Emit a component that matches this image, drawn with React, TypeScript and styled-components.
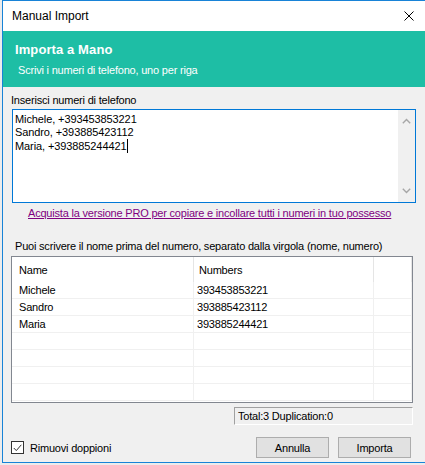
import React from "react";
import styled, { createGlobalStyle } from "styled-components";

const GlobalStyle = createGlobalStyle`
  html, body {
    margin: 0;
    padding: 0;
    background: #ececec;
    font-family: "Liberation Sans", Arial, sans-serif;
    font-size: 11px;
    letter-spacing: -0.2px;
    color: #000;
  }
`;

const Window = styled.div`
  box-sizing: border-box;
  margin-left: 2px;
  width: 423px;
  height: 463px;
  border: 1px solid #1883d7;
  border-right: none;
  background: #f0f0f0;
  display: flex;
  flex-direction: column;
  overflow: hidden;
`;

const TitleBar = styled.div`
  height: 30px;
  flex-shrink: 0;
  background: #fff;
  display: flex;
  align-items: center;
  justify-content: space-between;
  padding: 0 11px 0 9px;
`;

const TitleText = styled.span`
  font-size: 12px;
  line-height: 16px;
  letter-spacing: 0;
`;

const Banner = styled.div`
  height: 56px;
  flex-shrink: 0;
  box-sizing: border-box;
  background: #1ebea5;
  color: #fff;
  padding: 11px 0 0 12px;
`;

const BannerTitle = styled.div`
  font-size: 13px;
  font-weight: 700;
  line-height: 16px;
  letter-spacing: 0.1px;
`;

const BannerSubtitle = styled.div`
  margin: 6px 0 0 3px;
  line-height: 13px;
`;

const Body = styled.div`
  display: flex;
  flex-direction: column;
  padding-left: 8px;
`;

const Label = styled.div<{ $top: number; $left?: number }>`
  margin-top: ${({ $top }) => $top}px;
  margin-left: ${({ $left = 0 }) => $left}px;
  line-height: 13px;
  white-space: nowrap;
`;

const TextBox = styled.div`
  box-sizing: border-box;
  margin: 2px 0 0 1px;
  width: 404px;
  height: 94px;
  border: 1px solid #0078d7;
  background: #fff;
  display: flex;
`;

const TextContent = styled.div`
  flex: 1;
  padding: 3px 2px;
  line-height: 13px;
  letter-spacing: -0.1px;
  white-space: pre;
`;

const Caret = styled.span`
  display: inline-block;
  width: 1px;
  height: 14px;
  margin-left: 1px;
  background: #000;
  vertical-align: -3px;
`;

const ScrollBar = styled.div`
  width: 17px;
  background: #f0f0f0;
  display: flex;
  flex-direction: column;
  justify-content: space-between;
  align-items: center;
  padding: 8px 0;
`;

const Link = styled.a`
  margin: 4px 0 0 17px;
  line-height: 13px;
  color: #800080;
  text-decoration: underline;
  white-space: nowrap;
  cursor: pointer;
`;

const ListView = styled.div`
  box-sizing: border-box;
  margin-top: 3px;
  width: 402px;
  height: 147px;
  border: 1px solid #828790;
  background: #fff;
  overflow: hidden;
`;

const ListRow = styled.div<{ $header?: boolean }>`
  box-sizing: border-box;
  display: grid;
  grid-template-columns: 182px 180px 1fr;
  height: ${({ $header }) => ($header ? 25 : 17)}px;
  border-bottom: ${({ $header }) => ($header ? "none" : "1px solid #f0f0f0")};
`;

const Cell = styled.div<{ $pad: number; $header?: boolean }>`
  box-sizing: border-box;
  display: flex;
  align-items: center;
  padding-left: ${({ $pad }) => $pad}px;
  border-right: 1px solid ${({ $header }) => ($header ? "#e5e5e5" : "#f0f0f0")};
  white-space: nowrap;
`;

const StatusBox = styled.div`
  box-sizing: border-box;
  margin: 4px 0 0 223px;
  width: 179px;
  height: 18px;
  border-top: 1px solid #a0a0a0;
  border-left: 1px solid #a0a0a0;
  border-right: 1px solid #fff;
  border-bottom: 1px solid #fff;
  padding-left: 3px;
  line-height: 16px;
`;

const Footer = styled.div`
  margin: 12px 14px 0 0;
  height: 21px;
  display: flex;
  align-items: center;
`;

const CheckLabel = styled.label`
  display: flex;
  align-items: center;
  gap: 6px;
`;

const CheckBox = styled.span`
  box-sizing: border-box;
  width: 13px;
  height: 13px;
  border: 1px solid #333;
  background: #fff;
  display: flex;
  align-items: center;
  justify-content: center;
`;

const Buttons = styled.div`
  margin-left: auto;
  display: flex;
  gap: 9px;
`;

const Button = styled.button`
  box-sizing: border-box;
  width: 73px;
  height: 21px;
  padding: 0;
  border: 1px solid #adadad;
  background: #e1e1e1;
  font: inherit;
  letter-spacing: inherit;
  color: #000;
`;

const Chevron = ({ up }: { up?: boolean }) => (
  <svg width="9" height="6" viewBox="0 0 9 6">
    <path
      d={up ? "M0.8 5.2 L4.5 1.5 L8.2 5.2" : "M0.8 0.8 L4.5 4.5 L8.2 0.8"}
      fill="none"
      stroke="#a6a6a6"
      strokeWidth="1.4"
    />
  </svg>
);

const contacts = [
  { name: "Michele", number: "393453853221" },
  { name: "Sandro", number: "393885423112" },
  { name: "Maria", number: "393885244421" },
];

const App = () => {
  const rows = [...contacts, ...Array(4).fill({ name: "", number: "" })];
  return (
    <>
      <GlobalStyle />
      <Window>
        <TitleBar>
          <TitleText>Manual Import</TitleText>
          <svg width="10" height="10" viewBox="0 0 10 10">
            <path d="M0.5 0.5 L9.5 9.5 M9.5 0.5 L0.5 9.5" stroke="#000" strokeWidth="1" />
          </svg>
        </TitleBar>
        <Banner>
          <BannerTitle>Importa a Mano</BannerTitle>
          <BannerSubtitle>Scrivi i numeri di telefono, uno per riga</BannerSubtitle>
        </Banner>
        <Body>
          <Label $top={7}>Inserisci numeri di telefono</Label>
          <TextBox>
            <TextContent>
              {"Michele, +393453853221\nSandro, +393885423112\nMaria, +393885244421"}
              <Caret />
            </TextContent>
            <ScrollBar>
              <Chevron up />
              <Chevron />
            </ScrollBar>
          </TextBox>
          <Link>Acquista la versione PRO per copiare e incollare tutti i numeri in tuo possesso</Link>
          <Label $top={20} $left={4}>
            Puoi scrivere il nome prima del numero, separato dalla virgola (nome, numero)
          </Label>
          <ListView>
            <ListRow $header>
              <Cell $header $pad={7}>Name</Cell>
              <Cell $header $pad={5}>Numbers</Cell>
              <Cell $header $pad={0} />
            </ListRow>
            {rows.map((r, i) => (
              <ListRow key={i}>
                <Cell $pad={7}>{r.name}</Cell>
                <Cell $pad={3}>{r.number}</Cell>
                <Cell $pad={0} />
              </ListRow>
            ))}
          </ListView>
          <StatusBox>Total:3 Duplication:0</StatusBox>
          <Footer>
            <CheckLabel>
              <CheckBox>
                <svg width="9" height="8" viewBox="0 0 9 8">
                  <path d="M0.8 4 L3.3 6.6 L8.3 0.8" fill="none" stroke="#333" strokeWidth="1" />
                </svg>
              </CheckBox>
              Rimuovi doppioni
            </CheckLabel>
            <Buttons>
              <Button>Annulla</Button>
              <Button>Importa</Button>
            </Buttons>
          </Footer>
        </Body>
      </Window>
    </>
  );
};

export default App;
